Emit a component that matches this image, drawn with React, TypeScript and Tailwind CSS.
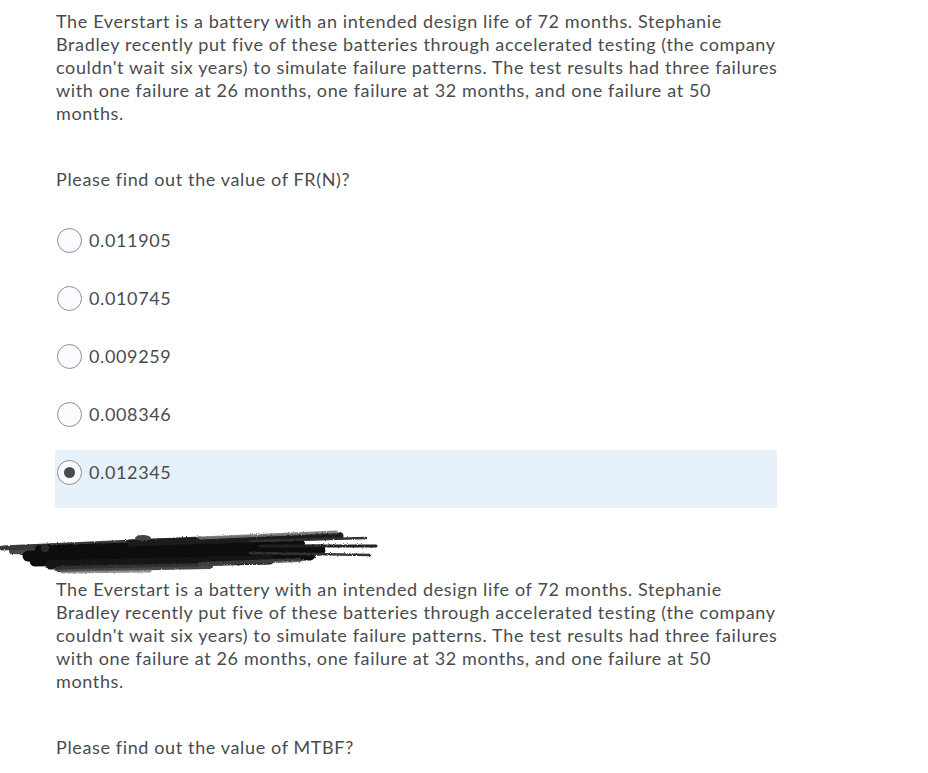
const intro = [
  "The Everstart is a battery with an intended design life of 72 months. Stephanie",
  "Bradley recently put five of these batteries through accelerated testing (the company",
  "couldn't wait six years) to simulate failure patterns. The test results had three failures",
  "with one failure at 26 months, one failure at 32 months, and one failure at 50",
  "months.",
];

const options = ["0.011905", "0.010745", "0.009259", "0.008346", "0.012345"];
const selected = 4;

const textCls =
  "text-[18px] leading-[23px] tracking-[0.63px] text-[#494c4e] [font-variant-ligatures:none]";

function Question({ prompt }: { prompt: string }) {
  return (
    <div className="ml-[56px]">
      <p className={textCls}>
        {intro.map((line, i) => (
          <span key={i} className="block whitespace-nowrap">
            {line}
          </span>
        ))}
      </p>
      <p className={`mt-[43px] ${textCls}`}>{prompt}</p>
    </div>
  );
}

// marker strokes over the redacted line, in page coords (y offset 508)
const strokes: [number, number, number, number, number, string, number][] = [
  [2, 548, 200, 539, 5, "#262626", 0.9],
  [12, 551, 60, 553, 6, "#333", 0.9],
  [40, 550, 300, 543, 10, "#0d0d0d", 1],
  [28, 556, 320, 550, 11, "#0d0d0d", 1],
  [35, 561, 310, 555, 11, "#111", 1],
  [50, 565, 270, 560, 9, "#181818", 1],
  [58, 569, 210, 566, 6, "#333", 0.9],
  [62, 572, 150, 571, 3, "#666", 0.7],
  [130, 543, 340, 536, 7, "#1a1a1a", 1],
  [200, 538, 336, 532, 3, "#777", 0.9],
  [250, 541, 366, 538, 2.5, "#333", 1],
  [260, 546, 376, 546, 3, "#222", 1],
  [250, 553, 370, 555, 2.5, "#333", 1],
  [200, 564, 300, 560, 4, "#444", 0.8],
];

function Scribble() {
  return (
    <svg width="380" height="70" viewBox="0 508 380 70" className="block">
      <defs>
        <filter id="rough" x="-5%" y="-30%" width="110%" height="160%">
          <feTurbulence type="fractalNoise" baseFrequency="0.9" numOctaves="2" seed="3" />
          <feDisplacementMap in="SourceGraphic" scale="2.5" />
        </filter>
      </defs>
      <g strokeLinecap="round" fill="none" filter="url(#rough)">
        {strokes.map(([x1, y1, x2, y2, w, c, o], i) => (
          <path key={i} d={`M${x1} ${y1} L${x2} ${y2}`} stroke={c} strokeWidth={w} opacity={o} />
        ))}
        <ellipse cx="143" cy="538" rx="8" ry="3" fill="#444" />
        <circle cx="45" cy="548" r="4" fill="#2c2c2c" />
      </g>
    </svg>
  );
}

export default function App() {
  return (
    <div className="min-h-screen bg-white pt-[10px] font-['Lato','Noto_Sans',sans-serif]">
      <Question prompt="Please find out the value of FR(N)?" />

      <div className="ml-[55px] mt-[27px] w-[722px]">
        {options.map((opt, i) => {
          const on = i === selected;
          return (
            <div
              key={opt}
              className={`flex h-[58px] items-start pt-[10px] ${on ? "bg-[#e6f1fc]" : ""}`}
            >
              <span className="ml-[2px] flex h-[25px] w-[25px] items-center justify-center rounded-full border border-[#8c8e91] bg-[#f9fbff]">
                {on && <span className="h-[11px] w-[11px] rounded-full bg-[#494c4e]" />}
              </span>
              <span className={`ml-[7px] ${textCls} leading-[25px]`}>{opt}</span>
            </div>
          );
        })}
      </div>

      <Scribble />

      <Question prompt="Please find out the value of MTBF?" />
    </div>
  );
}
